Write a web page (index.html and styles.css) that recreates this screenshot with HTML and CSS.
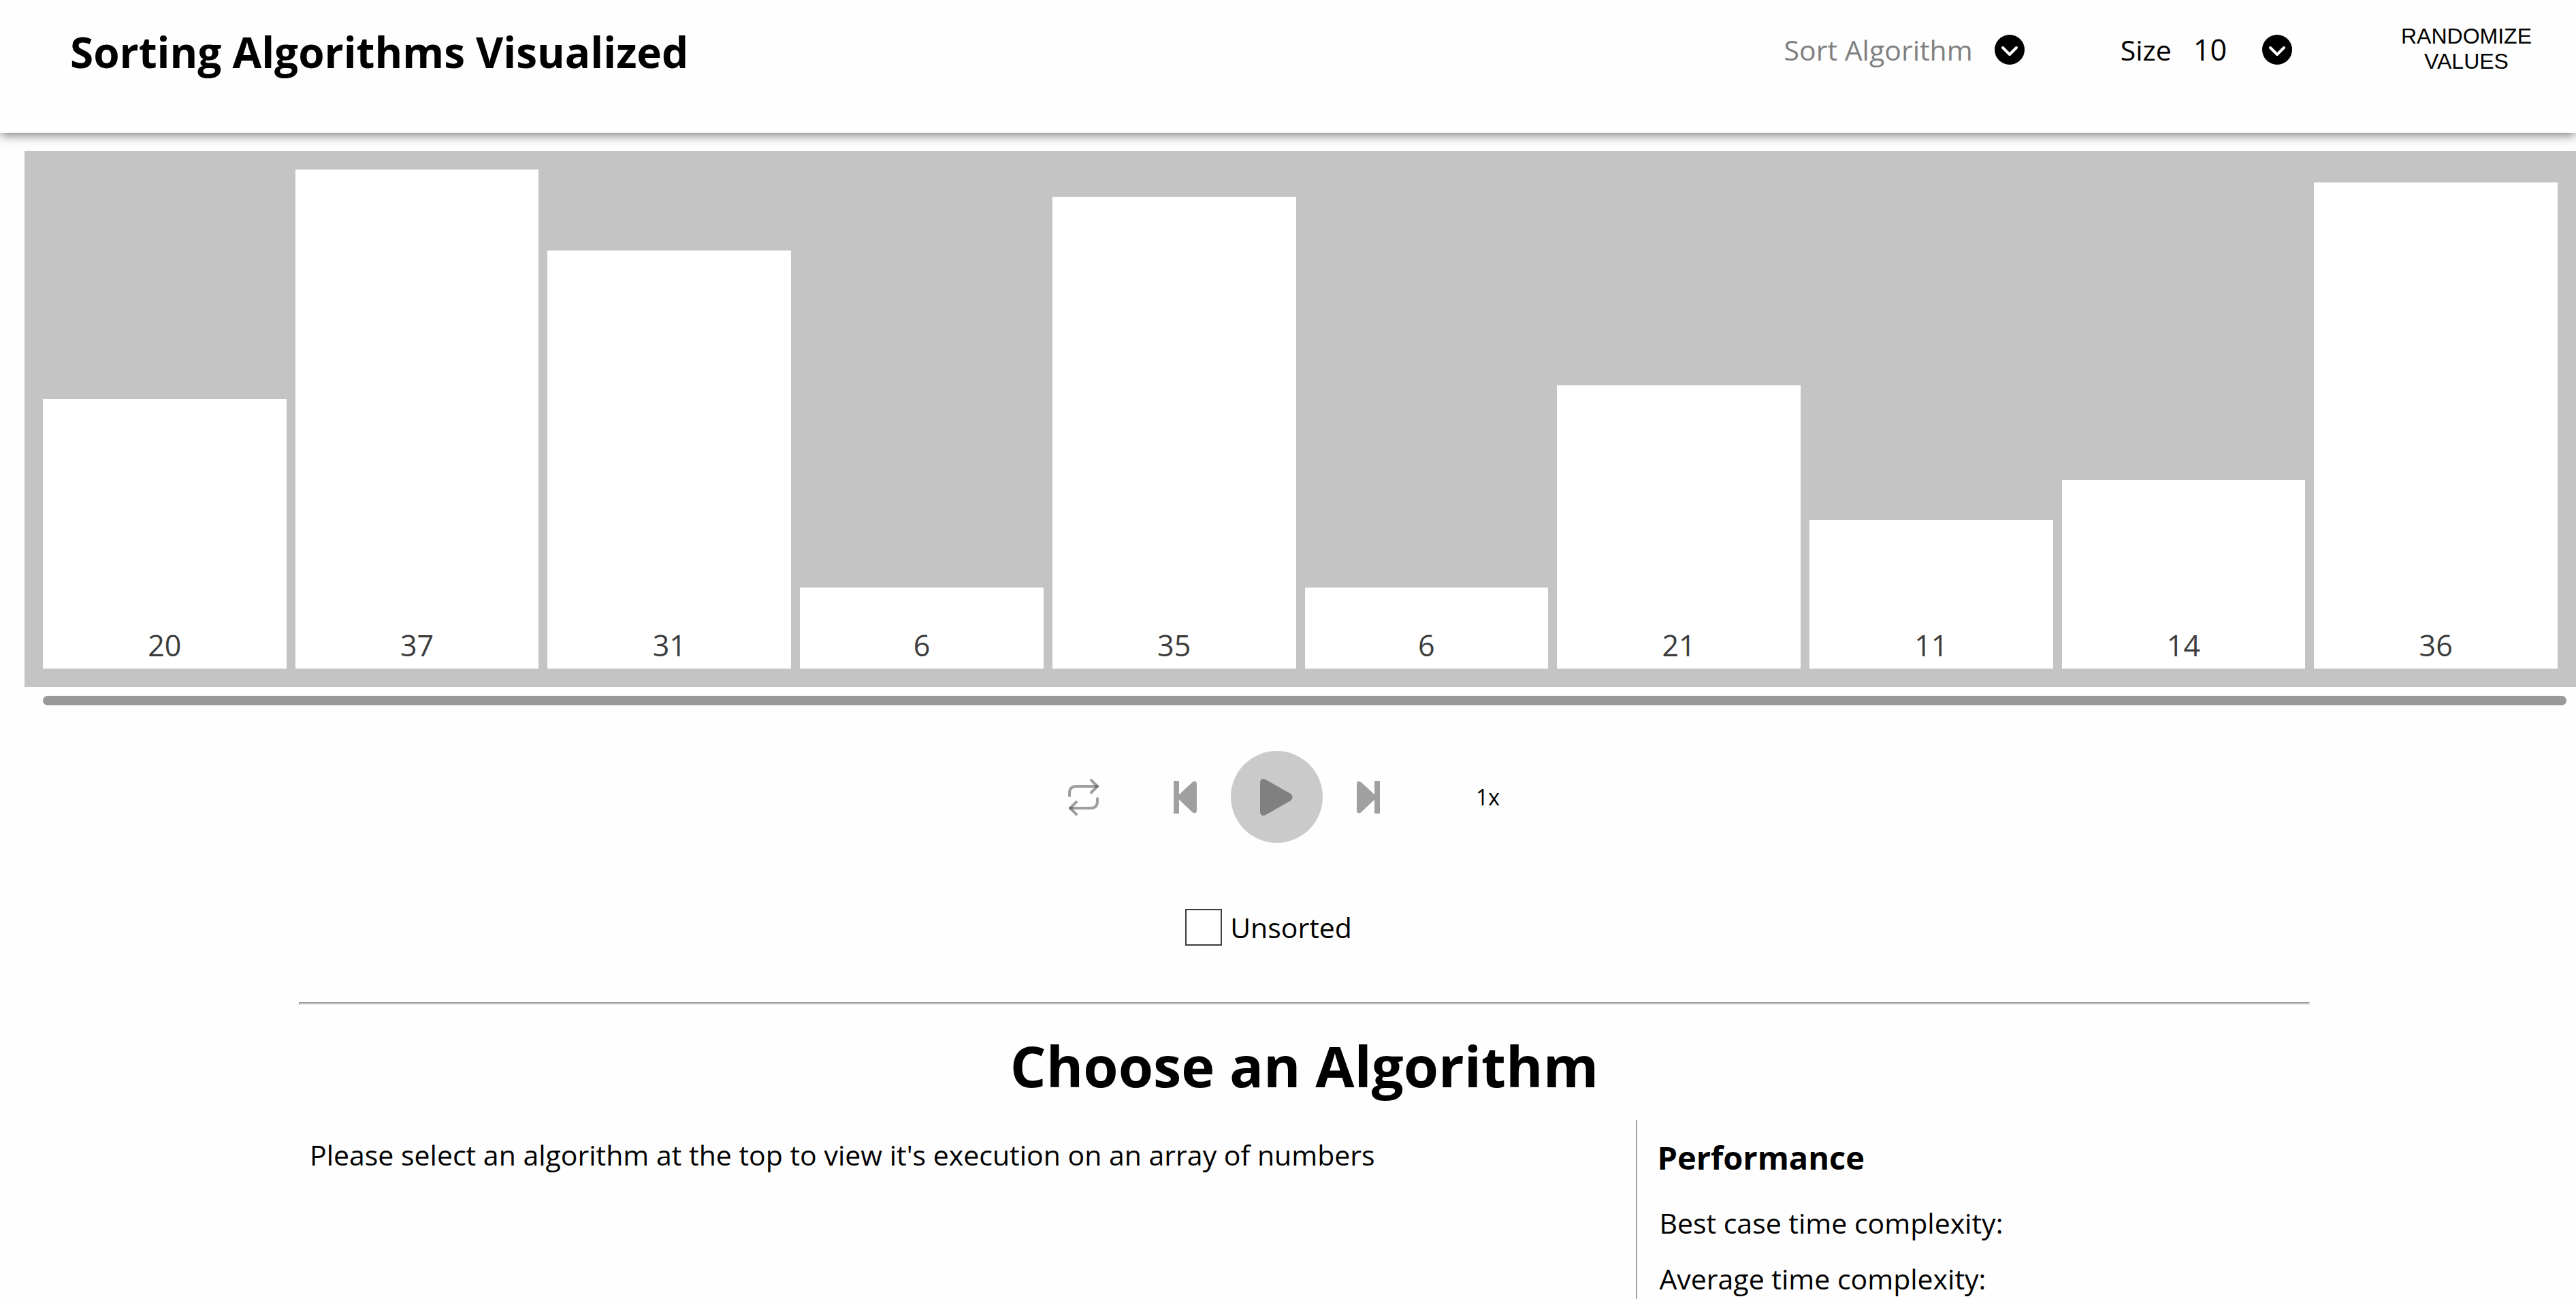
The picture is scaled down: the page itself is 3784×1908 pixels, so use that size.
FILE: index.html
```html
<!DOCTYPE html>
<html lang="en">
<head>
<meta charset="utf-8">
<meta name="viewport" content="width=device-width, initial-scale=1">
<title>Sorting Algorithms Visualized</title>
<link rel="stylesheet" href="styles.css">
</head>
<body>
<header class="topbar">
  <h1 class="brand">Sorting Algorithms Visualized</h1>
  <div class="tools">
    <button class="picker picker-muted" type="button">
      <span>Sort Algorithm</span>
      <svg class="chevron" viewBox="0 0 44 44" aria-hidden="true"><circle cx="22" cy="22" r="22"/><path d="M12 19l10 10 10-10"/></svg>
    </button>
    <button class="picker picker-size" type="button">
      <span>Size</span>
      <span class="size-value">10</span>
      <svg class="chevron" viewBox="0 0 44 44" aria-hidden="true"><circle cx="22" cy="22" r="22"/><path d="M12 19l10 10 10-10"/></svg>
    </button>
    <button class="randomize" type="button">RANDOMIZE VALUES</button>
  </div>
</header>
<main>
  <section class="chart" aria-label="Values">
    <div class="bar" style="height:396px">20</div>
    <div class="bar" style="height:733px">37</div>
    <div class="bar" style="height:614px">31</div>
    <div class="bar" style="height:119px">6</div>
    <div class="bar" style="height:693px">35</div>
    <div class="bar" style="height:119px">6</div>
    <div class="bar" style="height:416px">21</div>
    <div class="bar" style="height:218px">11</div>
    <div class="bar" style="height:277px">14</div>
    <div class="bar" style="height:714px">36</div>
  </section>
  <div class="progress"></div>
  <div class="controls">
    <button class="icon-button repeat" type="button" aria-label="Repeat">
      <svg width="46" height="54" viewBox="0 0 46 54" aria-hidden="true"><path d="M2 25v-4q0-10 10-10h31"/><path d="M34 2l9 9-9 9"/><path d="M43 29v4q0 10-10 10H3"/><path d="M12 34l-9 9 9 9"/></svg>
    </button>
    <button class="icon-button" type="button" aria-label="Step back">
      <svg width="34" height="48" viewBox="0 0 34 48" aria-hidden="true"><path d="M0 1q0-1 1-1h6q1 0 1 1v19L28 1.500q6-3 6 4v37q0 7-6 4L8 27.500V47q0 1-1 1H1q-1 0-1-1z"/></svg>
    </button>
    <button class="play" type="button" aria-label="Play">
      <svg width="48" height="54" viewBox="0 0 48 54" aria-hidden="true"><path d="M0 5q1-7 8-4l37 21q5 5 0 10L8 53q-7 3-8-4z"/></svg>
    </button>
    <button class="icon-button" type="button" aria-label="Step forward">
      <svg width="34" height="48" viewBox="0 0 34 48" aria-hidden="true"><path d="M34 1q0-1-1-1h-6q-1 0-1 1v19L6 1.500q-6-3-6 4v37q0 7 6 4L26 27.500V47q0 1 1 1h6q1 0 1-1z"/></svg>
    </button>
    <button class="speed" type="button">1x</button>
  </div>
  <div class="legend"><span class="swatch"></span><span>Unsorted</span></div>
  <section class="details">
    <hr class="rule">
    <h2 class="heading">Choose an Algorithm</h2>
    <div class="columns">
      <p class="intro">Please select an algorithm at the top to view it's execution on an array of numbers</p>
      <div class="performance">
        <h3 class="subheading">Performance</h3>
        <p class="metric">Best case time complexity:</p>
        <p class="metric">Average time complexity:</p>
      </div>
    </div>
  </section>
</main>
</body>
</html>
```
FILE: styles.css
```css
* { box-sizing: border-box; }
body {
  margin: 0;
  background: #fefefe;
  color: #000;
  font-family: "Segoe UI", "Open Sans", "Noto Sans", sans-serif;
  font-size: 41px;
  line-height: 60px;
  overflow: hidden;
}
h1, h2, h3, p { margin: 0; }
button {
  margin: 0;
  padding: 0;
  border: 0;
  background: none;
  color: inherit;
  font: inherit;
}
.topbar {
  display: flex;
  align-items: flex-start;
  justify-content: space-between;
  height: 195px;
  padding: 32px 64px 0 103px;
  background: #fefefe;
  box-shadow: 0 5px 14px -1px rgba(0, 0, 0, .5);
}
.brand { font-size: 62px; line-height: 88px; }
.tools { display: flex; align-items: flex-start; }
.picker { display: flex; align-items: center; height: 82px; }
.picker-muted { gap: 32px; color: #808080; }
.picker-size { margin-left: 141px; }
.size-value { margin: 0 52px 0 32px; font-size: 43px; }
.chevron { width: 44px; height: 44px; }
.chevron path {
  fill: none;
  stroke: #fff;
  stroke-width: 4;
  stroke-linecap: round;
  stroke-linejoin: round;
}
.randomize {
  width: 194px;
  margin-left: 159px;
  padding-top: 3px;
  font-family: Arial, "Liberation Sans", sans-serif;
  font-size: 32px;
  line-height: 37px;
}
.chart {
  display: grid;
  grid-template-columns: repeat(10, 1fr);
  align-items: end;
  margin: 27px 0 0 36px;
  padding: 27px 14px 27px 27px;
  background: #c4c4c4;
}
.bar {
  display: flex;
  align-items: flex-end;
  justify-content: center;
  margin-right: 13px;
  padding-bottom: 4px;
  background: #fff;
  color: #3c3c3c;
  font-size: 43px;
}
.progress {
  height: 14px;
  margin: 13px 14px 0 63px;
  border-radius: 7px;
  background: #999;
}
.controls {
  display: flex;
  align-items: center;
  justify-content: center;
  gap: 50px;
  margin-top: 67px;
  padding-right: 12px;
}
.icon-button, .play { display: flex; align-items: center; justify-content: center; }
.icon-button { fill: #a0a0a0; }
.repeat { margin-right: 59px; }
.repeat path {
  fill: none;
  stroke: rgba(64, 64, 64, .5);
  stroke-width: 4;
  stroke-linecap: round;
  stroke-linejoin: round;
}
.play { width: 135px; height: 135px; border-radius: 50%; background: #cacaca; fill: #808080; }
.speed { margin-left: 91px; font-size: 32px; line-height: 44px; }
.legend {
  display: flex;
  align-items: center;
  justify-content: center;
  gap: 12px;
  margin-top: 94px;
  padding-right: 57px;
}
.swatch { width: 54px; height: 54px; border: 2px solid #3c3c3c; background: #fff; }
.details { margin: 80px 391px 0 439px; }
.rule { margin: 0; border: 2px inset #eee; }
.heading { margin-top: 29px; font-size: 83px; line-height: 120px; text-align: center; }
.columns { display: grid; grid-template-columns: 66.5% 1fr; margin-top: 20px; }
.intro { padding: 21px 0 0 16px; }
.performance { min-height: 270px; padding: 20px 0 0 29px; border-left: 2px solid #a0a0a0; }
.subheading { margin-bottom: 31px; font-size: 47px; line-height: 70px; }
.metric { margin-bottom: 22px; padding-left: 3px; }
```
